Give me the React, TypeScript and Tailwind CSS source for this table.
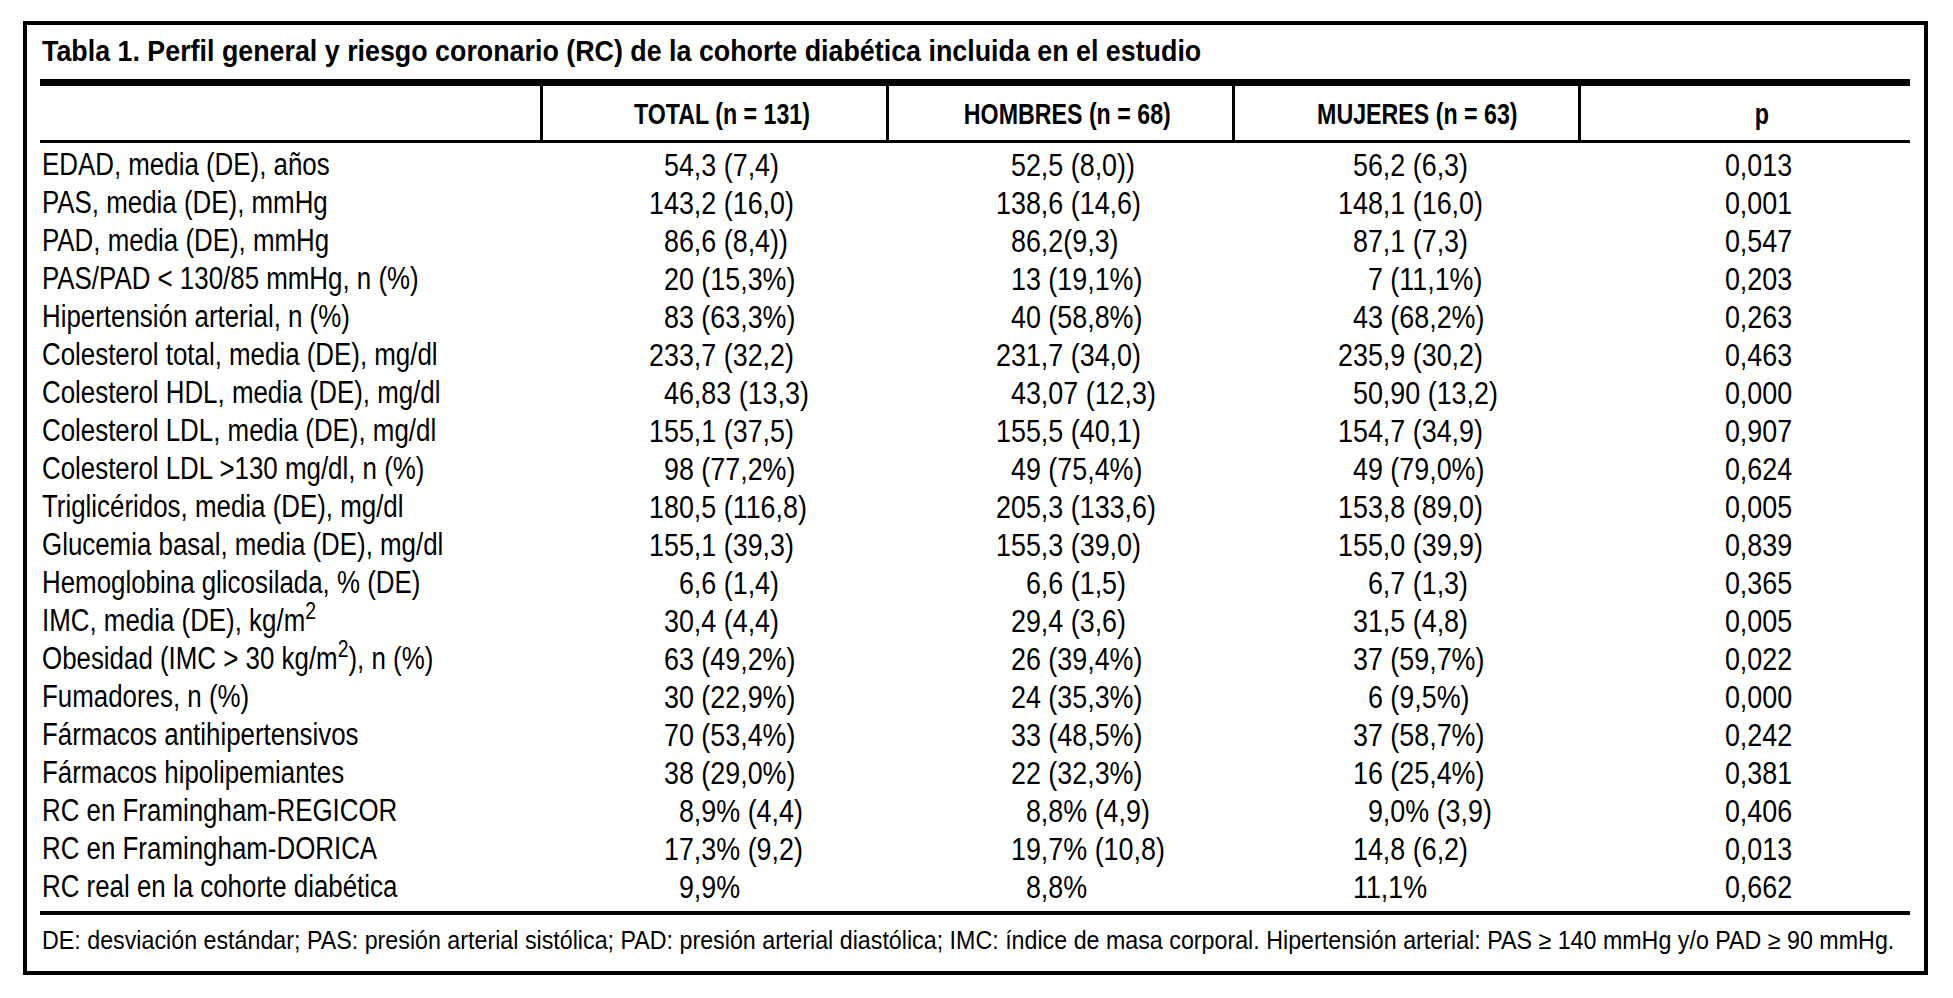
import React from 'react';

type Row = {
  label: React.ReactNode;
  total: string;
  hombres: string;
  mujeres: string;
  p: string;
};

const rows: Row[] = [
  { label: 'EDAD, media (DE), años', total: '54,3 (7,4)', hombres: '52,5 (8,0))', mujeres: '56,2 (6,3)', p: '0,013' },
  { label: 'PAS, media (DE), mmHg', total: '143,2 (16,0)', hombres: '138,6 (14,6)', mujeres: '148,1 (16,0)', p: '0,001' },
  { label: 'PAD, media (DE), mmHg', total: '86,6 (8,4))', hombres: '86,2(9,3)', mujeres: '87,1 (7,3)', p: '0,547' },
  { label: 'PAS/PAD < 130/85 mmHg, n (%)', total: '20 (15,3%)', hombres: '13 (19,1%)', mujeres: '7 (11,1%)', p: '0,203' },
  { label: 'Hipertensión arterial, n (%)', total: '83 (63,3%)', hombres: '40 (58,8%)', mujeres: '43 (68,2%)', p: '0,263' },
  { label: 'Colesterol total, media (DE), mg/dl', total: '233,7 (32,2)', hombres: '231,7 (34,0)', mujeres: '235,9 (30,2)', p: '0,463' },
  { label: 'Colesterol HDL, media (DE), mg/dl', total: '46,83 (13,3)', hombres: '43,07 (12,3)', mujeres: '50,90 (13,2)', p: '0,000' },
  { label: 'Colesterol LDL, media (DE), mg/dl', total: '155,1 (37,5)', hombres: '155,5 (40,1)', mujeres: '154,7 (34,9)', p: '0,907' },
  { label: 'Colesterol LDL >130 mg/dl, n (%)', total: '98 (77,2%)', hombres: '49 (75,4%)', mujeres: '49 (79,0%)', p: '0,624' },
  { label: 'Triglicéridos, media (DE), mg/dl', total: '180,5 (116,8)', hombres: '205,3 (133,6)', mujeres: '153,8 (89,0)', p: '0,005' },
  { label: 'Glucemia basal, media (DE), mg/dl', total: '155,1 (39,3)', hombres: '155,3 (39,0)', mujeres: '155,0 (39,9)', p: '0,839' },
  { label: 'Hemoglobina glicosilada, % (DE)', total: '6,6 (1,4)', hombres: '6,6 (1,5)', mujeres: '6,7 (1,3)', p: '0,365' },
  {
    label: (
      <>
        IMC, media (DE), kg/m<sup>2</sup>
      </>
    ),
    total: '30,4 (4,4)',
    hombres: '29,4 (3,6)',
    mujeres: '31,5 (4,8)',
    p: '0,005',
  },
  {
    label: (
      <>
        Obesidad (IMC {'>'} 30 kg/m<sup>2</sup>), n (%)
      </>
    ),
    total: '63 (49,2%)',
    hombres: '26 (39,4%)',
    mujeres: '37 (59,7%)',
    p: '0,022',
  },
  { label: 'Fumadores, n (%)', total: '30 (22,9%)', hombres: '24 (35,3%)', mujeres: '6 (9,5%)', p: '0,000' },
  { label: 'Fármacos antihipertensivos', total: '70 (53,4%)', hombres: '33 (48,5%)', mujeres: '37 (58,7%)', p: '0,242' },
  { label: 'Fármacos hipolipemiantes', total: '38 (29,0%)', hombres: '22 (32,3%)', mujeres: '16 (25,4%)', p: '0,381' },
  { label: 'RC en Framingham-REGICOR', total: '8,9% (4,4)', hombres: '8,8% (4,9)', mujeres: '9,0% (3,9)', p: '0,406' },
  { label: 'RC en Framingham-DORICA', total: '17,3% (9,2)', hombres: '19,7% (10,8)', mujeres: '14,8 (6,2)', p: '0,013' },
  { label: 'RC real en la cohorte diabética', total: '9,9%', hombres: '8,8%', mujeres: '11,1%', p: '0,662' },
];

const cols = 'grid grid-cols-[500px_346px_346px_346px_332px]';

// numbers line up on the integer part (3 digits wide); the face is narrowed
// since no condensed grotesque is installed
function Num({ value, className }: { value: string; className: string }) {
  const digits = value.match(/^\d+/);
  const pad = Math.max(0, 3 - (digits ? digits[0].length : 0));
  return (
    <div className={`whitespace-nowrap text-[32px] ${className}`}>
      <span className="inline-block origin-left scale-x-[0.84]">
        <span className="invisible">{'0'.repeat(pad)}</span>
        {value}
      </span>
    </div>
  );
}

function HeadCell({ children, className }: { children: React.ReactNode; className: string }) {
  return (
    <div className={`border-l-[3px] border-black flex items-center justify-center pt-[4px] whitespace-nowrap ${className}`}>
      <span className="inline-block origin-center scale-x-[0.8]">{children}</span>
    </div>
  );
}

export default function App() {
  return (
    <div className="min-h-screen overflow-hidden bg-white pl-[23px] pt-[21px] text-black font-['Liberation_Sans',Arial,sans-serif]">
      <div className="w-[1905px] h-[954px] border-4 border-black pl-[13px] pr-[14px]">
        {/* Title */}
        <h1 className="pt-[10px] pb-[11px] pl-[2px] text-[29px] leading-[33px] font-bold whitespace-nowrap">
          <span className="inline-block origin-left scale-x-[0.925]">
            Tabla 1. Perfil general y riesgo coronario (RC) de la cohorte diabética incluida en el estudio
          </span>
        </h1>

        {/* Header */}
        <div className="border-t-[7px] border-b-[3px] border-black">
          <div className={`${cols} h-[54px] text-[29px] font-bold`}>
            <div />
            <HeadCell className="pl-[14px]">TOTAL (n = 131)</HeadCell>
            <HeadCell className="pl-[14px]">HOMBRES (n = 68)</HeadCell>
            <HeadCell className="pl-[22px]">MUJERES (n = 63)</HeadCell>
            <HeadCell className="pl-[32px]">p</HeadCell>
          </div>
        </div>

        {/* Body */}
        <div className="pt-[3px] pb-[5px] border-b-4 border-black">
          {rows.map((row, i) => (
            <div key={i} className={`${cols} h-[38px] leading-[38px]`}>
              <div className="pl-[2px] text-[31px] whitespace-nowrap">
                <span className="inline-block origin-left scale-x-[0.835]">{row.label}</span>
              </div>
              <Num value={row.total} className="pl-[109px]" />
              <Num value={row.hombres} className="pl-[110px]" />
              <Num value={row.mujeres} className="pl-[106px]" />
              <Num value={row.p} className="pl-[117px]" />
            </div>
          ))}
        </div>

        {/* Footnote */}
        <p className="pt-[10px] pl-[2px] text-[25px] leading-[30px] whitespace-nowrap">
          <span className="inline-block origin-left scale-x-[0.93]">
            DE: desviación estándar; PAS: presión arterial sistólica; PAD: presión arterial diastólica; IMC: índice de
            masa corporal. Hipertensión arterial: PAS ≥ 140 mmHg y/o PAD ≥ 90 mmHg.
          </span>
        </p>
      </div>
    </div>
  );
}
